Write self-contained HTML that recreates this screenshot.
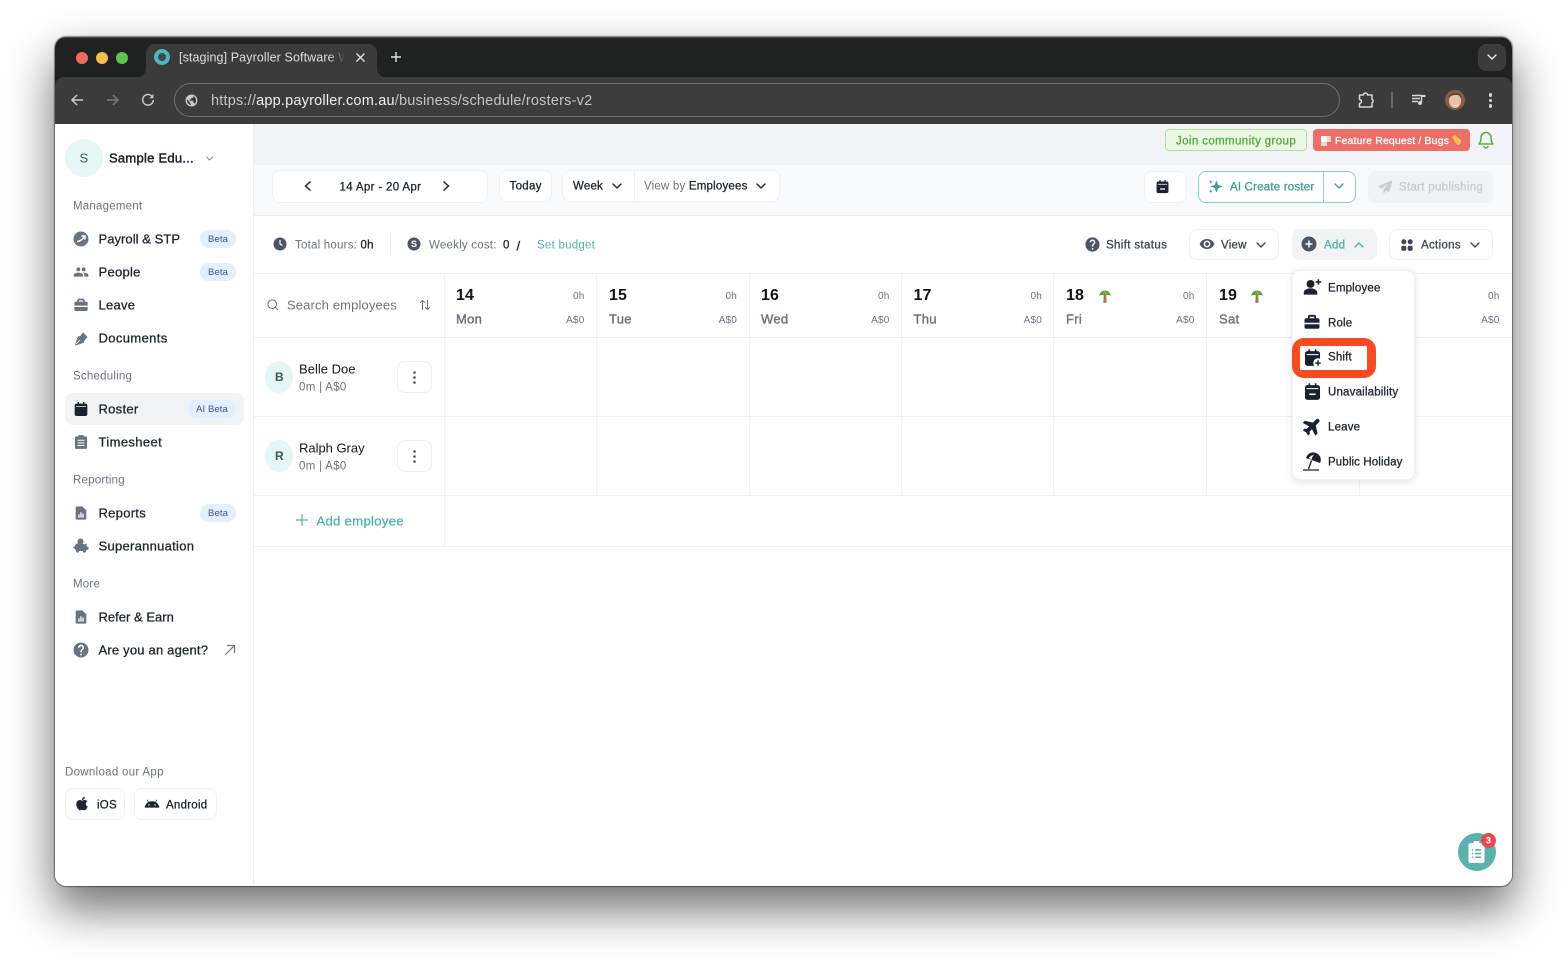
<!DOCTYPE html>
<html lang="en">
<head>
<meta charset="utf-8">
<title>Payroller roster</title>
<style>
html,body{margin:0;padding:0;background:#fff;width:1568px;height:960px;overflow:hidden}
body{font-family:"Liberation Sans",sans-serif;position:relative}
#win{position:absolute;left:55px;top:37px;width:1457px;height:849px;border-radius:11px;overflow:hidden;background:#fff}
#shadow{position:absolute;left:55px;top:37px;width:1457px;height:849px;border-radius:11px;box-shadow:0 22px 46px 2px rgba(0,0,0,.55),0 0 1px 1px rgba(0,0,0,.45)}
#in{position:absolute;left:-55px;top:-37px;width:1568px;height:960px}
.t{position:absolute;white-space:nowrap;line-height:1;transform:translateY(-50%);color:#1f2533;font-size:12px}
.m{-webkit-text-stroke:.3px currentColor}
.r{transform:translate(-100%,-50%)}
.b{position:absolute;box-sizing:border-box}
.btn{position:absolute;box-sizing:border-box;background:#fff;border:1px solid #eef0f3;border-radius:8px}
.i{position:absolute;overflow:visible}
.hl{position:absolute;background:#eff1f4}
.nav{font-size:13px;color:#1f2533;letter-spacing:.28px}
.sec{font-size:11.5px;color:#6b7280;letter-spacing:.22px}
.pill{position:absolute;box-sizing:border-box;left:200px;width:36px;height:18px;border-radius:9px;background:#e3effb;color:#3c4fa3;font-size:9.5px;line-height:19px;text-align:center;letter-spacing:.1px}
.num{font-size:16px;font-weight:700;color:#10131a;letter-spacing:.1px}
.day{font-size:13px;color:#6b7280;letter-spacing:.3px;-webkit-text-stroke:.4px currentColor}
.sm{font-size:10px;color:#6b7280;letter-spacing:.2px}
.dd{font-size:11.5px;color:#1f2533;letter-spacing:.18px}
</style>
</head>
<body>
<svg width="0" height="0" style="position:absolute">
<defs>
<symbol id="cal" viewBox="0 0 24 24"><path fill="currentColor" d="M7 1.500h2V4h6V1.500h2V4h1.500A3 3 0 0 1 21.500 7v12.500a3 3 0 0 1-3 3h-13a3 3 0 0 1-3-3V7a3 3 0 0 1 3-3H7zM4.500 7.800v1.200h15V7.800z"/></symbol>
<symbol id="chev" viewBox="0 0 12 12"><path fill="none" stroke="currentColor" stroke-width="1.400" stroke-linecap="round" stroke-linejoin="round" d="M2 4l4 4 4-4"/></symbol>
<symbol id="rep" viewBox="0 0 24 24"><path fill="currentColor" d="M6 2h8l6 6v12a2 2 0 0 1-2 2H6a2 2 0 0 1-2-2V4a2 2 0 0 1 2-2z"/><path fill="#fff" d="M8 14h2v5H8zM11 11h2v8h-2zM14 13h2v6h-2z"/></symbol>
<symbol id="help" viewBox="0 0 24 24"><path fill="currentColor" d="M12 2C6.480 2 2 6.480 2 12s4.480 10 10 10 10-4.480 10-10S17.520 2 12 2zm1 17h-2v-2h2v2zm2.070-7.750l-.9.920C13.450 12.900 13 13.500 13 15h-2v-.5c0-1.100.45-2.100 1.170-2.830l1.240-1.260c.37-.36.59-.86.59-1.410 0-1.100-.9-2-2-2s-2 .9-2 2H8c0-2.210 1.790-4 4-4s4 1.790 4 4c0 .88-.36 1.680-.93 2.250z"/></symbol>
<symbol id="brief" viewBox="0 0 24 24"><path fill="currentColor" d="M9 2.500h6a2.500 2.500 0 0 1 2.500 2.500v2h2A2.500 2.500 0 0 1 22 9.500V13H2V9.500A2.500 2.500 0 0 1 4.500 7h2V5A2.500 2.500 0 0 1 9 2.500zM9 5v2h6V5zM2 15h20v3.500a2.500 2.500 0 0 1-2.500 2.500h-15A2.500 2.500 0 0 1 2 18.500z"/></symbol>
<symbol id="palm" viewBox="0 0 24 24"><path fill="#a5794a" d="M10 9.500h4l1 14H9z"/><path fill="#5d9c3a" d="M2 12C3 5 8 2.500 12 2.500s9 2.500 10 9.500c-2-1.800-3.300-1.800-4.500-1-.6-1.200-2-1.300-3-.4-1.300-.9-3.700-.9-5 0-1-.9-2.400-.8-3 .4C5.300 10.200 4 10.200 2 12z"/><path fill="#7cb342" d="M12 2.500c-2 1.500-3 4-3 7 1-.5 5-.5 6 0 0-3-1-5.500-3-7z"/></symbol>
</defs>
</svg>

<div id="shadow"></div>
<div id="win"><div id="in">

<!-- tab strip -->
<div class="b" style="left:55px;top:37px;width:1457px;height:52px;background:#202221;border-top:1px solid #4a4a4a"></div>
<div class="b" style="left:55px;top:77px;width:1457px;height:47px;background:#3b3b3b;border-radius:9px 9px 0 0"></div>
<div class="b" style="left:146px;top:44px;width:231px;height:34px;background:#3b3b3b;border-radius:9px 9px 0 0"></div>
<svg class="i" style="left:136px;top:68px" width="10" height="10"><path d="M0 10a10 10 0 0 0 10-10v10z" fill="#3b3b3b"/></svg>
<svg class="i" style="left:377px;top:68px" width="10" height="10"><path d="M0 0a10 10 0 0 0 10 10H0z" fill="#3b3b3b"/></svg>
<div class="b" style="left:76px;top:52px;width:12px;height:12px;border-radius:50%;background:#ec6a5e"></div>
<div class="b" style="left:96px;top:52px;width:12px;height:12px;border-radius:50%;background:#f4bf4f"></div>
<div class="b" style="left:116px;top:52px;width:12px;height:12px;border-radius:50%;background:#61c554"></div>
<div class="b" style="left:154px;top:49px;width:16px;height:16px;border-radius:50%;border:4.500px solid #4db6bf;background:#3a4a50"></div>
<div class="t" style="left:179px;top:57.500px;font-size:12.500px;line-height:1.4;color:#dedede;letter-spacing:.1px;width:166px;overflow:hidden;-webkit-mask-image:linear-gradient(90deg,#000 90%,transparent)">[staging] Payroller Software Wave</div>
<svg class="i" style="left:355px;top:52px" width="11" height="11"><path d="M1.500 1.500l8 8M9.500 1.500l-8 8" stroke="#e6e6e6" stroke-width="1.300"/></svg>
<svg class="i" style="left:390px;top:51px" width="12" height="12"><path d="M6 1v10M1 6h10" stroke="#e6e6e6" stroke-width="1.400"/></svg>
<div class="b" style="left:1478px;top:44px;width:28px;height:27px;border-radius:8px;background:#3b3b3b"></div>
<svg class="i" style="left:1486px;top:51px;color:#eee" width="12" height="12"><use href="#chev"/></svg>

<!-- toolbar -->
<svg class="i" style="left:70px;top:93px" width="14" height="14"><path d="M13 7H2M7 2L2 7l5 5" fill="none" stroke="#c9c9c9" stroke-width="1.500"/></svg>
<svg class="i" style="left:106px;top:93px" width="14" height="14"><path d="M1 7h11M7 2l5 5-5 5" fill="none" stroke="#7a7a7a" stroke-width="1.500"/></svg>
<svg class="i" style="left:141px;top:93px" width="14" height="14"><path d="M11.600 4.200A5.300 5.300 0 1 0 12.300 7" fill="none" stroke="#c9c9c9" stroke-width="1.500"/><path d="M12.500 1v4.200H8.300z" fill="#c9c9c9"/></svg>
<div class="b" style="left:174px;top:83px;width:1166px;height:34px;border-radius:17px;border:1px solid #707070;background:#3c3c3c"></div>
<svg class="i" style="left:185px;top:94px" width="13" height="13" viewBox="0 0 24 24"><path fill="#c8c8c8" d="M12 1a11 11 0 1 0 0 22 11 11 0 0 0 0-22zM3.500 12c0-.7.1-1.400.3-2l5.200 5.200v1a2 2 0 0 0 2 2v2.200A8.500 8.500 0 0 1 3.500 12zm14.700 5.800a2 2 0 0 0-1.900-1.400h-1v-3a1 1 0 0 0-1-1H8.200v-2h2a1 1 0 0 0 1-1v-2h2a2 2 0 0 0 2-2V4.100a8.500 8.500 0 0 1 2.900 13.700z"/></svg>
<div class="t" style="left:211px;top:100.500px;font-size:14.500px;color:#c4c4c4;letter-spacing:.2px">https://<span style="color:#f0f0f0">app.payroller.com.au</span>/business/schedule/rosters-v2</div>
<svg class="i" style="left:1357px;top:91px" width="18" height="18" viewBox="0 0 18 18"><path d="M2.500 4h4a2 2 0 0 1 4 0h4.500v4.200a2 2 0 0 1 0 3.600V16H2.500v-3.500a2 2 0 0 0 0-4z" fill="none" stroke="#d6d6d6" stroke-width="1.500" stroke-linejoin="round"/></svg>
<div class="b" style="left:1391px;top:92px;width:1.500px;height:16px;background:#666"></div>
<svg class="i" style="left:1411px;top:92px" width="16" height="16" viewBox="0 0 16 16"><path d="M1 3.500h10M1 6.500h8M1 9.500h6" stroke="#d6d6d6" stroke-width="1.400"/><path d="M10.500 3v7.500" stroke="#d6d6d6" stroke-width="1.400"/><circle cx="9" cy="11" r="2" fill="#d6d6d6"/><path d="M10.500 3h4v2h-4z" fill="#d6d6d6"/></svg>
<svg class="i" style="left:1445px;top:90px" width="20" height="20" viewBox="0 0 20 20"><circle cx="10" cy="10" r="10" fill="#8a5d45"/><ellipse cx="10" cy="11" rx="6" ry="7" fill="#e8bfa8"/><path d="M3 8c1-6 11-8 14-1-3-2-5-2-7-2S5 6 3 8z" fill="#6a4632"/><path d="M7 14c2 1.500 4 1.500 6 0-1 2.500-5 2.500-6 0z" fill="#fff"/></svg>
<div class="b" style="left:1488.500px;top:93px;width:3.500px;height:3.500px;border-radius:50%;background:#d6d6d6"></div>
<div class="b" style="left:1488.500px;top:98.500px;width:3.500px;height:3.500px;border-radius:50%;background:#d6d6d6"></div>
<div class="b" style="left:1488.500px;top:104px;width:3.500px;height:3.500px;border-radius:50%;background:#d6d6d6"></div>

<!-- page backgrounds -->
<div class="b" style="left:253px;top:124px;width:1259px;height:41px;background:#f1f3f7"></div>
<div class="b" style="left:253px;top:165px;width:1259px;height:51px;background:#f8f9fb;border-bottom:1px solid #eaecef"></div>
<div class="b" style="left:253px;top:124px;width:1px;height:762px;background:#eceef1"></div>

<!-- sidebar -->
<div class="b" style="left:65px;top:139px;width:38px;height:38px;border-radius:50%;background:#e5f6f7"></div>
<div class="t" style="left:79.500px;top:158px;font-size:13px;color:#2f6360">S</div>
<div class="t" style="left:109px;top:158px;font-size:13px;color:#1c2130;letter-spacing:.25px;-webkit-text-stroke:.45px currentColor">Sample Edu...</div>
<svg class="i" style="left:205px;top:154px;color:#8a909a" width="9" height="9" viewBox="0 0 12 12"><use href="#chev"/></svg>

<div class="t sec" style="left:73px;top:206.500px">Management</div>
<div class="t sec" style="left:73px;top:376.500px">Scheduling</div>
<div class="t sec" style="left:73px;top:480.500px">Reporting</div>
<div class="t sec" style="left:73px;top:584.500px">More</div>

<div class="b" style="left:65px;top:393px;width:179px;height:32px;border-radius:8px;background:#f2f3f5"></div>

<div class="t nav m" style="left:98.500px;top:239px;letter-spacing:.05px">Payroll &amp; STP</div>
<div class="t nav m" style="left:98.500px;top:272px">People</div>
<div class="t nav m" style="left:98.500px;top:305px">Leave</div>
<div class="t nav m" style="left:98.500px;top:338px;letter-spacing:.38px">Documents</div>
<div class="t nav m" style="left:98.500px;top:409px">Roster</div>
<div class="t nav m" style="left:98.500px;top:442px;letter-spacing:.38px">Timesheet</div>
<div class="t nav m" style="left:98.500px;top:513px">Reports</div>
<div class="t nav m" style="left:98.500px;top:546px">Superannuation</div>
<div class="t nav m" style="left:98.500px;top:617px;letter-spacing:.02px">Refer &amp; Earn</div>
<div class="t nav m" style="left:98.500px;top:650px;letter-spacing:.2px">Are you an agent?</div>

<div class="pill" style="top:230px">Beta</div>
<div class="pill" style="top:263px">Beta</div>
<div class="pill" style="top:504px">Beta</div>
<div class="pill" style="top:400px;left:188px;width:48px">AI Beta</div>

<svg class="i" style="left:73px;top:231px" width="16" height="16" viewBox="0 0 16 16"><circle cx="8" cy="8" r="7.500" fill="#6b7280"/><path d="M4 10.500c1.500 0 5-1 7-4.500M8.500 5h3.500v3.500" fill="none" stroke="#fff" stroke-width="1.500"/></svg>
<svg class="i" style="left:73px;top:264px;color:#6b7280" width="16" height="16" viewBox="0 0 24 24"><path fill="currentColor" d="M16 11c1.660 0 2.990-1.340 2.990-3S17.660 5 16 5c-1.660 0-3 1.340-3 3s1.340 3 3 3zm-8 0c1.660 0 2.990-1.340 2.990-3S9.660 5 8 5C6.340 5 5 6.340 5 8s1.340 3 3 3zm0 2c-2.330 0-7 1.170-7 3.500V19h14v-2.500c0-2.330-4.670-3.500-7-3.500zm8 0c-.29 0-.62.02-.97.05 1.160.84 1.970 1.970 1.970 3.450V19h6v-2.500c0-2.330-4.670-3.500-7-3.500z"/></svg>
<svg class="i" style="left:73px;top:297px;color:#6b7280" width="16" height="16"><use href="#brief"/></svg>
<svg class="i" style="left:74px;top:331px" width="15" height="15" viewBox="0 0 16 16"><path d="M9.500 1.500l5 5-3 3-1 3L3 15l-2 .5.500-2 2.500-7.500 3-1zM1.500 14.500L6.500 9.500" fill="#6b7280"/><path d="M2 14l4.500-4.500" stroke="#fff" stroke-width=".8"/></svg>
<svg class="i" style="left:73px;top:401px;color:#1c2130" width="16" height="16"><use href="#cal"/></svg>
<svg class="i" style="left:75px;top:434px" width="12" height="16" viewBox="0 0 14 16"><path fill="#6b7280" d="M4 0h6v1.500h2.500A1.500 1.500 0 0 1 14 3v11.500a1.500 1.500 0 0 1-1.500 1.500h-11A1.500 1.500 0 0 1 0 14.500V3a1.500 1.500 0 0 1 1.500-1.500H4z"/><path stroke="#fff" stroke-width="1.200" d="M3 6h8M3 9h8M3 12h8"/></svg>
<svg class="i" style="left:73px;top:505px;color:#6b7280" width="16" height="16"><use href="#rep"/></svg>
<svg class="i" style="left:73px;top:538px" width="16" height="16" viewBox="0 0 16 16"><circle cx="7.500" cy="3.500" r="3" fill="#6b7280"/><path fill="#6b7280" d="M3 6c2-1 6-1 8 .5l3-1-.7 2.500 2.200 1v2.500l-2 .5-1 2.500h-2.500v-1.500h-4V14.500H3.500l-1-3-2.500-2 1.500-1z"/></svg>
<svg class="i" style="left:73px;top:609px;color:#6b7280" width="16" height="16"><use href="#rep"/></svg>
<svg class="i" style="left:72px;top:641px;color:#6b7280" width="18" height="18"><use href="#help"/></svg>
<svg class="i" style="left:224px;top:644px" width="12" height="12"><path d="M1.500 10.500l9-9M3 1.500h7.500V9" fill="none" stroke="#6b7280" stroke-width="1.200"/></svg>

<div class="t sec" style="left:65px;top:772.500px;letter-spacing:.3px">Download our App</div>
<div class="btn" style="left:65px;top:788px;width:60px;height:32px"></div>
<div class="btn" style="left:134px;top:788px;width:83px;height:32px"></div>
<svg class="i" style="left:73px;top:794px" width="18" height="19" viewBox="0 0 24 24"><path fill="#1f2533" d="M17.050 20.280c-.98.95-2.050.8-3.080.35-1.090-.46-2.090-.48-3.240 0-1.440.62-2.200.44-3.060-.35C2.790 15.250 3.510 7.590 9.050 7.310c1.350.07 2.290.74 3.080.8 1.180-.24 2.310-.93 3.570-.84 1.510.12 2.650.72 3.400 1.800-3.120 1.870-2.380 5.980.48 7.130-.57 1.500-1.310 2.990-2.540 4.090zM12.030 7.250c-.15-2.230 1.660-4.070 3.740-4.250.29 2.580-2.340 4.500-3.740 4.250z"/></svg>
<div class="t m" style="left:97px;top:805.500px;font-size:11.500px;letter-spacing:.25px">iOS</div>
<svg class="i" style="left:144px;top:795px" width="16" height="16" viewBox="0 0 24 24"><path fill="#1f2533" d="M1 19c.3-3.600 2.200-6.600 5.100-8.200L4.300 7.700c-.2-.3 0-.6.2-.7.3-.2.6 0 .7.200l1.800 3.100c1.300-.6 3.100-1 5-1s3.700.4 5 1l1.800-3.100c.1-.2.500-.4.700-.2.300.2.400.5.200.7l-1.800 3.100c2.900 1.600 4.800 4.600 5.100 8.200H1z"/><circle cx="7.500" cy="15" r="1.100" fill="#fff"/><circle cx="16.500" cy="15" r="1.100" fill="#fff"/></svg>
<div class="t m" style="left:166px;top:805.500px;font-size:11.500px;letter-spacing:.25px">Android</div>

<!-- top banner -->
<div class="b" style="left:1165px;top:129px;width:142px;height:22px;border-radius:4px;background:#e9f7e3;border:1px solid #b6e0a5"></div>
<div class="t m" style="left:1176px;top:141.500px;font-size:11.500px;color:#55ab3a;letter-spacing:.38px">Join community group</div>
<div class="b" style="left:1313px;top:129px;width:157px;height:22px;border-radius:4px;background:#ec6f67"></div>
<div class="b" style="left:1321px;top:136px;width:10px;height:10px;background:#fbd3cf"></div>
<div class="b" style="left:1321px;top:136px;width:6px;height:6px;background:#fff"></div>
<div class="b" style="left:1327px;top:142px;width:4px;height:4px;background:#ec6f67"></div>
<div class="t m" style="left:1335px;top:140.500px;font-size:10.500px;color:#fff;letter-spacing:.14px">Feature Request / Bugs</div>
<svg class="i" style="left:1451px;top:134px" width="12" height="12" viewBox="0 0 12 12"><path d="M1 3l3-2 6 5v3l-2 2H6z" fill="#f2c14e"/><path d="M9 1l1.500 1.500M11 4l.5.500" stroke="#d9a23a"/></svg>
<svg class="i" style="left:1478px;top:131px" width="16" height="18" viewBox="0 0 16 18"><path d="M8 1.500a5 5 0 0 1 5 5c0 3.500.7 5 2 6.500H1c1.300-1.500 2-3 2-6.500a5 5 0 0 1 5-5z" fill="none" stroke="#62a93f" stroke-width="1.500" stroke-linejoin="round"/><path d="M5.800 15.200a2.300 2.300 0 0 0 4.400 0" fill="none" stroke="#62a93f" stroke-width="1.500"/></svg>

<!-- roster toolbar -->
<div class="btn" style="left:272px;top:170px;width:216px;height:33px"></div>
<svg class="i" style="left:303px;top:180px" width="10" height="12"><path d="M7.500 1.500L2.500 6l5 4.500" fill="none" stroke="#1f2533" stroke-width="1.500"/></svg>
<svg class="i" style="left:441px;top:180px" width="10" height="12"><path d="M2.500 1.500L7.500 6l-5 4.500" fill="none" stroke="#1f2533" stroke-width="1.500"/></svg>
<div class="t m" style="left:339.500px;top:187.500px;font-size:11.500px;letter-spacing:.34px">14 Apr - 20 Apr</div>
<div class="btn" style="left:499px;top:170px;width:53px;height:32px"></div>
<div class="t m" style="left:509.500px;top:187px;font-size:11.500px;letter-spacing:.32px">Today</div>
<div class="btn" style="left:562px;top:170px;width:218px;height:32px"></div>
<div class="b" style="left:634px;top:170px;width:1px;height:32px;background:#eef0f3"></div>
<div class="t m" style="left:573px;top:187px;font-size:11.500px;letter-spacing:.2px">Week</div>
<svg class="i" style="left:611px;top:180px;color:#1f2533" width="12" height="12"><use href="#chev"/></svg>
<div class="t" style="left:644px;top:187px;font-size:11.500px;color:#6b7280;letter-spacing:.2px">View by <span class="m" style="color:#1f2533">Employees</span></div>
<svg class="i" style="left:755px;top:180px;color:#1f2533" width="12" height="12"><use href="#chev"/></svg>

<div class="btn" style="left:1144px;top:171px;width:43px;height:32px"></div>
<svg class="i" style="left:1155px;top:179px;color:#1c2130" width="15" height="15" viewBox="0 0 24 24"><use href="#cal" width="24" height="24"/><path d="M8 15h8v2H8z" fill="#fff"/></svg>
<div class="b" style="left:1198px;top:171px;width:158px;height:32px;border:1px solid #8fcfcb;border-radius:8px;background:#fff"></div>
<div class="b" style="left:1323px;top:171px;width:1px;height:32px;background:#8fcfcb"></div>
<svg class="i" style="left:1208px;top:179px" width="15" height="15" viewBox="0 0 16 16"><path fill="#3f9e98" d="M9 1.500l1.800 4.700L15.500 8l-4.700 1.800L9 14.500 7.200 9.800 2.500 8l4.700-1.800zM3 1l.6 1.400L5 3l-1.400.6L3 5l-.6-1.400L1 3l1.400-.6zM3 11l.6 1.400L5 13l-1.400.6L3 15l-.6-1.400L1 13l1.400-.6z"/></svg>
<div class="t m" style="left:1230px;top:187.500px;font-size:11.500px;color:#3f9e98;letter-spacing:.2px">AI Create roster</div>
<svg class="i" style="left:1333px;top:180px;color:#3f9e98" width="12" height="12"><use href="#chev"/></svg>
<div class="b" style="left:1368px;top:171px;width:125px;height:32px;border-radius:8px;background:#f1f2f4"></div>
<svg class="i" style="left:1376px;top:178px" width="18" height="18" viewBox="0 0 24 24"><path fill="#c9ccd2" d="M22 3L2 11l6 3 9-7-7 8.500V21l3.500-4 4 2z"/></svg>
<div class="t m" style="left:1399px;top:187.500px;font-size:11.500px;color:#c9ccd2;letter-spacing:.3px">Start publishing</div>

<!-- summary row -->
<svg class="i" style="left:273px;top:237px" width="14" height="14" viewBox="0 0 14 14"><circle cx="7" cy="7" r="6.500" fill="#4b5563"/><path d="M7 3v4l2.500 1.500" fill="none" stroke="#fff" stroke-width="1.200"/></svg>
<div class="t" style="left:295px;top:245.500px;font-size:11.500px;color:#6b7280;letter-spacing:.22px">Total hours: <span class="m" style="color:#1f2533">0h</span></div>
<div class="b" style="left:390px;top:233px;width:1px;height:22px;background:#e8eaed"></div>
<svg class="i" style="left:407px;top:237px" width="14" height="14" viewBox="0 0 14 14"><circle cx="7" cy="7" r="6.500" fill="#4b5563"/><text x="7" y="10.200" font-size="9" font-weight="700" fill="#fff" text-anchor="middle" font-family="Liberation Sans">S</text></svg>
<div class="t" style="left:429px;top:245.500px;font-size:11.500px;color:#6b7280;letter-spacing:.22px">Weekly cost:</div>
<div class="t m" style="left:503px;top:245.500px;font-size:11.500px">0</div>
<div class="t m" style="left:516.500px;top:245.500px;font-size:13px">/</div>
<div class="t" style="left:537px;top:245.500px;font-size:11.500px;color:#4fb3ad;letter-spacing:.25px">Set budget</div>

<svg class="i" style="left:1084px;top:236px;color:#4b5563" width="17" height="17"><use href="#help"/></svg>
<div class="t m" style="left:1106px;top:245.500px;font-size:11.500px;letter-spacing:.36px;color:#3f4652">Shift status</div>
<div class="btn" style="left:1189px;top:229px;width:90px;height:31px"></div>
<svg class="i" style="left:1199px;top:236px;color:#4b5563" width="16" height="16" viewBox="0 0 24 24"><path fill="currentColor" d="M12 4.500C7 4.500 2.730 7.610 1 12c1.730 4.390 6 7.500 11 7.500s9.270-3.110 11-7.500c-1.730-4.390-6-7.500-11-7.500zM12 17c-2.760 0-5-2.240-5-5s2.240-5 5-5 5 2.240 5 5-2.240 5-5 5zm0-8c-1.660 0-3 1.340-3 3s1.340 3 3 3 3-1.340 3-3-1.340-3-3-3z"/></svg>
<div class="t m" style="left:1221px;top:245.500px;font-size:11.500px;letter-spacing:.25px;color:#3f4652">View</div>
<svg class="i" style="left:1255px;top:238.500px;color:#3f4652" width="12" height="12"><use href="#chev"/></svg>
<div class="b" style="left:1292px;top:229px;width:85px;height:31px;border-radius:8px;background:#f1f3f5"></div>
<svg class="i" style="left:1301px;top:236px" width="16" height="16" viewBox="0 0 16 16"><circle cx="8" cy="8" r="7.500" fill="#4b5563"/><path d="M8 4.500v7M4.500 8h7" stroke="#fff" stroke-width="1.500"/></svg>
<div class="t m" style="left:1324px;top:245.500px;font-size:11.500px;color:#4fb3ad;letter-spacing:.3px">Add</div>
<svg class="i" style="left:1353px;top:238.500px;color:#4fb3ad;transform:rotate(180deg)" width="12" height="12"><use href="#chev"/></svg>
<div class="btn" style="left:1389px;top:229px;width:104px;height:31px"></div>
<svg class="i" style="left:1401px;top:238.500px" width="12" height="12"><circle cx="2.800" cy="2.800" r="2.500" fill="#3f4652"/><circle cx="9.200" cy="2.800" r="2.500" fill="#3f4652"/><rect x=".3" y="6.700" width="5" height="5" rx="1.500" fill="#3f4652"/><rect x="6.700" y="6.700" width="5" height="5" rx="1.500" fill="#3f4652"/></svg>
<div class="t m" style="left:1421px;top:245.500px;font-size:11.500px;letter-spacing:.32px;color:#3f4652">Actions</div>
<svg class="i" style="left:1469px;top:238.500px;color:#3f4652" width="12" height="12"><use href="#chev"/></svg>

<!-- grid -->
<div class="hl" style="left:253px;top:273px;width:1259px;height:1px"></div>
<div class="hl" style="left:253px;top:337px;width:1259px;height:1px"></div>
<div class="hl" style="left:253px;top:416px;width:1259px;height:1px"></div>
<div class="hl" style="left:253px;top:495px;width:1259px;height:1px"></div>
<div class="hl" style="left:253px;top:546px;width:1259px;height:1px"></div>
<div class="hl" style="left:444px;top:273px;width:1px;height:273px"></div>
<div class="hl" style="left:596px;top:273px;width:1px;height:222px"></div>
<div class="hl" style="left:749px;top:273px;width:1px;height:222px"></div>
<div class="hl" style="left:901px;top:273px;width:1px;height:222px"></div>
<div class="hl" style="left:1053px;top:273px;width:1px;height:222px"></div>
<div class="hl" style="left:1206px;top:273px;width:1px;height:222px"></div>
<div class="hl" style="left:1359px;top:273px;width:1px;height:222px"></div>

<svg class="i" style="left:267px;top:299px" width="12" height="12"><circle cx="5.200" cy="5.200" r="4.300" fill="none" stroke="#6b7280" stroke-width="1"/><path d="M8.400 8.400l2.600 2.600" stroke="#6b7280"/></svg>
<div class="t" style="left:287px;top:305px;font-size:13px;color:#6b7280;letter-spacing:.14px">Search employees</div>
<svg class="i" style="left:419px;top:299px" width="12" height="12"><path d="M3.500 11V1.500M1.200 3.800L3.500 1.500l2.300 2.300M8.500 1v9.500M6.200 8.200l2.300 2.300 2.300-2.300" fill="none" stroke="#6b7280" stroke-width="1"/></svg>

<div class="t num" style="left:456px;top:296px">14</div><div class="t day" style="left:456px;top:319px">Mon</div><div class="t sm r" style="left:584.500px;top:297px">0h</div><div class="t sm r" style="left:584.500px;top:320.500px">A$0</div>
<div class="t num" style="left:609px;top:296px">15</div><div class="t day" style="left:609px;top:319px">Tue</div><div class="t sm r" style="left:737px;top:297px">0h</div><div class="t sm r" style="left:737px;top:320.500px">A$0</div>
<div class="t num" style="left:761px;top:296px">16</div><div class="t day" style="left:761px;top:319px">Wed</div><div class="t sm r" style="left:889.500px;top:297px">0h</div><div class="t sm r" style="left:889.500px;top:320.500px">A$0</div>
<div class="t num" style="left:913.500px;top:296px">17</div><div class="t day" style="left:913.500px;top:319px">Thu</div><div class="t sm r" style="left:1042px;top:297px">0h</div><div class="t sm r" style="left:1042px;top:320.500px">A$0</div>
<div class="t num" style="left:1066px;top:296px">18</div><div class="t day" style="left:1066px;top:319px">Fri</div><div class="t sm r" style="left:1194.500px;top:297px">0h</div><div class="t sm r" style="left:1194.500px;top:320.500px">A$0</div>
<div class="t num" style="left:1219px;top:296px">19</div><div class="t day" style="left:1219px;top:319px">Sat</div>
<div class="t sm r" style="left:1499.500px;top:297px">0h</div><div class="t sm r" style="left:1499.500px;top:320.500px">A$0</div>
<svg class="i" style="left:1098px;top:289px" width="14" height="14"><use href="#palm"/></svg>
<svg class="i" style="left:1250px;top:289px" width="14" height="14"><use href="#palm"/></svg>

<!-- employees -->
<div class="b" style="left:265px;top:361px;width:28px;height:32px;border-radius:50%;background:#e5f6f7"></div>
<div class="t" style="left:275px;top:377px;font-size:12px;font-weight:700;color:#2f5f5c">B</div>
<div class="t" style="left:299px;top:368.500px;font-size:13px;color:#14171f;letter-spacing:.02px">Belle Doe</div>
<div class="t" style="left:299px;top:387.500px;font-size:11.500px;color:#6b7280;letter-spacing:.3px">0m | A$0</div>
<div class="btn" style="left:397px;top:361px;width:35px;height:32px"></div>
<svg class="i" style="left:412px;top:371px" width="5" height="13"><circle cx="2.500" cy="1.500" r="1.300" fill="#4b5563"/><circle cx="2.500" cy="6.500" r="1.300" fill="#4b5563"/><circle cx="2.500" cy="11.500" r="1.300" fill="#4b5563"/></svg>

<div class="b" style="left:265px;top:440px;width:28px;height:32px;border-radius:50%;background:#e5f6f7"></div>
<div class="t" style="left:275px;top:456px;font-size:12px;font-weight:700;color:#2f5f5c">R</div>
<div class="t" style="left:299px;top:447.500px;font-size:13px;color:#14171f;letter-spacing:-.02px">Ralph Gray</div>
<div class="t" style="left:299px;top:466.500px;font-size:11.500px;color:#6b7280;letter-spacing:.3px">0m | A$0</div>
<div class="btn" style="left:397px;top:440px;width:35px;height:32px"></div>
<svg class="i" style="left:412px;top:450px" width="5" height="13"><circle cx="2.500" cy="1.500" r="1.300" fill="#4b5563"/><circle cx="2.500" cy="6.500" r="1.300" fill="#4b5563"/><circle cx="2.500" cy="11.500" r="1.300" fill="#4b5563"/></svg>

<svg class="i" style="left:296px;top:514px" width="12" height="12"><path d="M6 0v12M0 6h12" stroke="#4fb3ad" stroke-width="1.200"/></svg>
<div class="t m" style="left:316.500px;top:520.500px;font-size:13px;color:#4fb3ad;letter-spacing:.36px">Add employee</div>

<!-- dropdown -->
<div class="b" style="left:1291.500px;top:269.500px;width:123px;height:210px;border-radius:8px;background:#fff;border:1px solid #f0f1f3;box-shadow:0 2px 8px rgba(20,25,40,.12)"></div>
<svg class="i" style="left:1303px;top:278px;color:#1c2130" width="19" height="19" viewBox="0 0 24 24"><circle cx="9.500" cy="7.500" r="5" fill="currentColor"/><path fill="currentColor" d="M1 21v-2.500c0-3.500 5-5.500 8.500-5.500s8.500 2 8.500 5.500V21z"/><path d="M19.500 1.500v7M16 5h7" stroke="currentColor" stroke-width="2" fill="none"/></svg>
<div class="t dd m" style="left:1328px;top:288.500px">Employee</div>
<svg class="i" style="left:1303px;top:312.500px;color:#1c2130" width="18" height="18"><use href="#brief"/></svg>
<div class="t dd m" style="left:1328px;top:323.500px">Role</div>

<div class="b" style="left:1292px;top:338px;width:84px;height:40px;border-radius:12px;background:#f54c22"></div>
<div class="b" style="left:1300px;top:346px;width:67px;height:24px;border-radius:1px;background:#fff"></div>
<svg class="i" style="left:1303px;top:347.500px;color:#1c2130" width="19" height="19" viewBox="0 0 24 24"><use href="#cal" width="24" height="24"/><circle cx="19" cy="19" r="6" fill="#fff"/><path d="M19 15.500v7M15.500 19h7" stroke="#1c2130" stroke-width="1.800"/></svg>
<div class="t dd m" style="left:1328px;top:358px">Shift</div>

<svg class="i" style="left:1303px;top:382px;color:#1c2130" width="19" height="19" viewBox="0 0 24 24"><use href="#cal" width="24" height="24"/><path d="M8 14.500h8v2H8z" fill="#fff"/></svg>
<div class="t dd m" style="left:1328px;top:393px">Unavailability</div>
<svg class="i" style="left:1302px;top:416px;color:#1c2130" width="21" height="21" viewBox="0 0 24 24"><path transform="rotate(45 12 12)" fill="currentColor" stroke="currentColor" stroke-width="1.600" stroke-linejoin="round" d="M21 16v-2l-8-5V3.500c0-.83-.67-1.500-1.500-1.500S10 2.670 10 3.500V9l-8 5v2l8-2.500V19l-2 1.500V22l3.500-1 3.500 1v-1.500L13 19v-5.500l8 2.500z"/></svg>
<div class="t dd m" style="left:1328px;top:428px">Leave</div>
<svg class="i" style="left:1303px;top:452px" width="19" height="19" viewBox="0 0 19 19"><path fill="#1c2130" d="M3 6a7.500 7.500 0 0 1 12.500-3.500A7 7 0 0 1 17 11z"/><path fill="#fff" d="M6 6c1-2 3.500-3 5-3-1 .8-2.500 3-2.500 5z"/><path d="M8.500 8.500L5.500 17M0 18h16" stroke="#1c2130" stroke-width="1.300" fill="none"/></svg>
<div class="t dd m" style="left:1328px;top:463px;letter-spacing:.12px">Public Holiday</div>

<!-- help widget -->
<div class="b" style="left:1458px;top:833px;width:38px;height:38px;border-radius:50%;background:#5bb2ad"></div>
<svg class="i" style="left:1468px;top:841px" width="17" height="22" viewBox="0 0 18 21" preserveAspectRatio="none"><path fill="#fff" d="M6 0h6v2h3.500A2 2 0 0 1 17.500 4v15a2 2 0 0 1-2 2h-13a2 2 0 0 1-2-2V4a2 2 0 0 1 2-2H6z"/><path stroke="#5bb2ad" stroke-width="1.500" d="M4 8.500h1.500M7.500 8.500H14M4 12h1.500M7.500 12H14M4 15.500h1.500M7.500 15.500H14"/></svg>
<div class="b" style="left:1481px;top:833px;width:15px;height:15px;border-radius:50%;background:#e5484d"></div>
<div class="t" style="left:1485.800px;top:840.500px;font-size:9.500px;color:#fff;font-weight:700">3</div>

</div></div>
</body>
</html>
